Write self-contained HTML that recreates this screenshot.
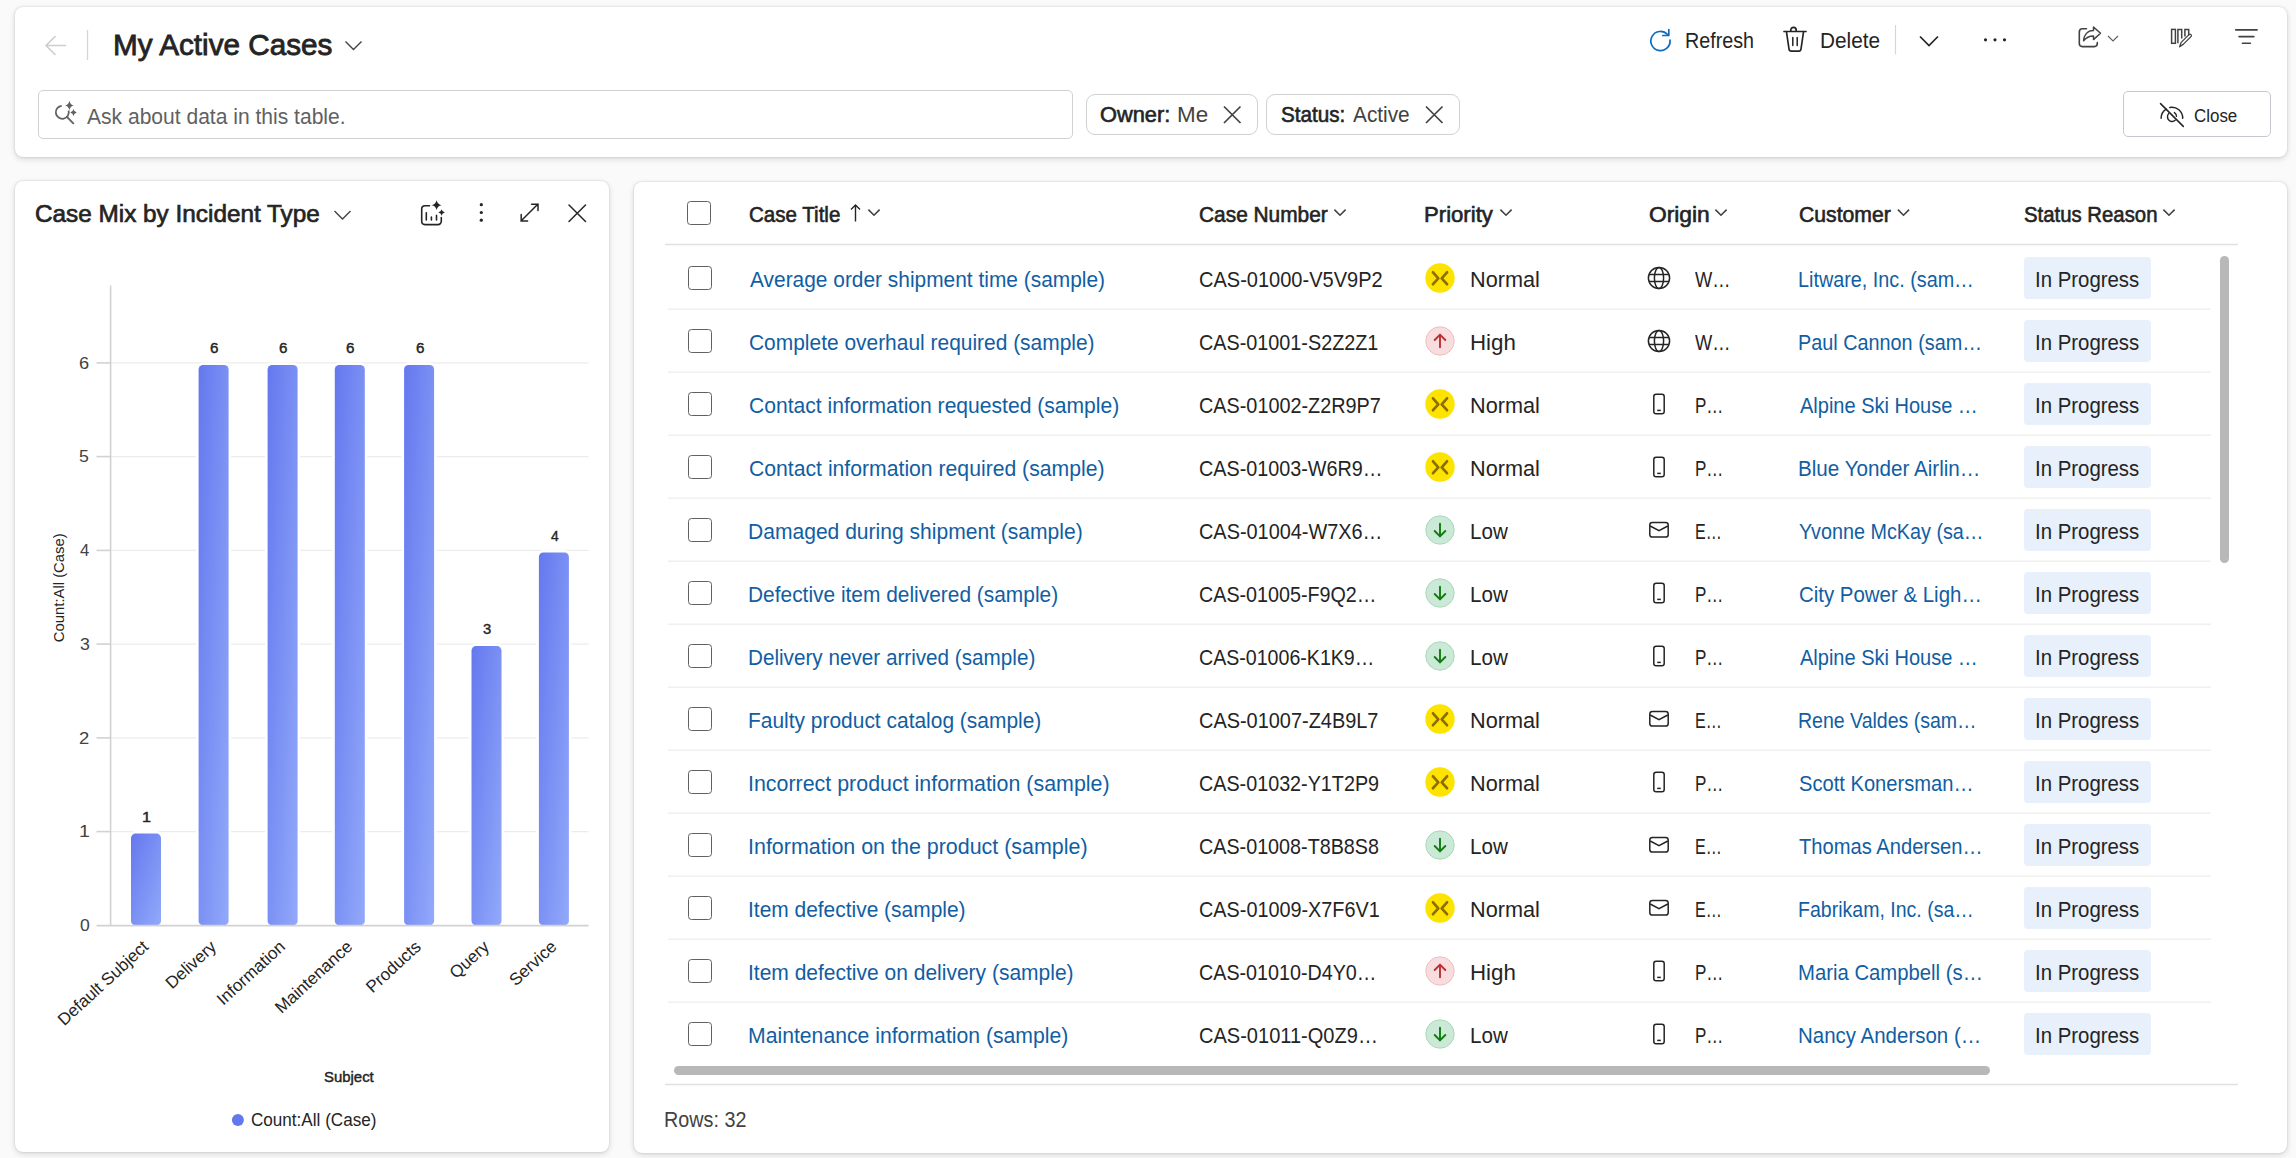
<!DOCTYPE html>
<html><head><meta charset="utf-8"><title>My Active Cases</title>
<style>
html,body{margin:0;padding:0;}
body{width:2296px;height:1158px;overflow:hidden;background:#fafafa;position:relative;font-family:"Liberation Sans",sans-serif;}
.t{position:absolute;white-space:nowrap;transform-origin:0 0;}
.card{position:absolute;background:#fff;border-radius:8px;box-shadow:0 0 2px rgba(0,0,0,0.17),0 2px 6px rgba(0,0,0,0.14);}
.abs{position:absolute;}
svg{position:absolute;overflow:visible;}
</style></head><body>

<div class="card" style="left:15px;top:7px;width:2272px;height:150px;"></div>
<svg style="left:0;top:0" width="2296" height="160"><path d="M65.5 45.5H46 M55 36.5L46 45.5L55 54.5" fill="none" stroke="#cdcdcd" stroke-width="1.6" stroke-linecap="round" stroke-linejoin="round"/><line x1="87.5" y1="30" x2="87.5" y2="60" stroke="#d6d6d6" stroke-width="1.3"/><path d="M345.5 41.5L353.5 49.5L361.5 41.5" fill="none" stroke="#424242" stroke-width="1.4"/></svg>
<div class="t" style="left:112.99px;top:29.90px;font-size:30.00px;line-height:30.00px;color:#242424;transform:scaleX(0.9893);-webkit-text-stroke:0.84px #242424;">My Active Cases</div>
<div class="abs" style="left:37.7px;top:89.6px;width:1033.5px;height:47.5px;border:1.5px solid #d1d1d1;border-radius:5px;background:#fff"></div>
<svg style="left:0;top:0" width="200" height="160"><path d="M68.6 110.6 A6.5 6.5 0 1 1 61.7 105.8" fill="none" stroke="#616161" stroke-width="1.8"/><line x1="66.9" y1="116.9" x2="73.3" y2="123.3" stroke="#616161" stroke-width="1.9" stroke-linecap="round"/><path d="M69.4 100.8 Q70.2 104.8 73.8 105.5 Q70.2 106.3 69.4 110.2 Q68.6 106.3 65 105.5 Q68.6 104.8 69.4 100.8Z" fill="#616161"/><path d="M73.5 109 Q74 112 76.8 112.5 Q74 113 73.5 116 Q73 113 70.2 112.5 Q73 112 73.5 109Z" fill="#616161"/></svg>
<div class="t" style="left:86.96px;top:106.65px;font-size:21.50px;line-height:21.50px;color:#616161;transform:scaleX(0.9789);">Ask about data in this table.</div>
<div class="abs" style="left:1085.8px;top:93.8px;width:170.5px;height:39.5px;border:1.5px solid #d1d1d1;border-radius:9px"></div>
<div class="t" style="left:1100.27px;top:105.05px;font-size:21.50px;line-height:21.50px;color:#242424;transform:scaleX(1.0148);-webkit-text-stroke:0.60px #242424;">Owner:</div>
<div class="t" style="left:1177.46px;top:105.05px;font-size:21.50px;line-height:21.50px;color:#424242;transform:scaleX(1.0424);">Me</div>
<div class="abs" style="left:1265.6px;top:93.8px;width:192px;height:39.5px;border:1.5px solid #d1d1d1;border-radius:9px"></div>
<div class="t" style="left:1280.66px;top:105.05px;font-size:21.50px;line-height:21.50px;color:#242424;transform:scaleX(0.9612);-webkit-text-stroke:0.60px #242424;">Status:</div>
<div class="t" style="left:1353.06px;top:105.05px;font-size:21.50px;line-height:21.50px;color:#424242;transform:scaleX(0.9679);">Active</div>
<svg style="left:0;top:0" width="2296" height="160"><path d="M1224 106.5L1240.5 123 M1240.5 106.5L1224 123" stroke="#424242" stroke-width="1.7" fill="none"/><path d="M1426 106.5L1442.5 123 M1442.5 106.5L1426 123" stroke="#424242" stroke-width="1.7" fill="none"/></svg>
<svg style="left:0;top:0" width="2296" height="160"><path d="M1667.5 34.5 A9.6 9.6 0 1 0 1670 40" fill="none" stroke="#0f6cbd" stroke-width="1.7" stroke-linecap="round"/><path d="M1668.8 29.5 L1668.8 35.5 L1662.8 35.5" fill="none" stroke="#0f6cbd" stroke-width="1.7" stroke-linecap="round" stroke-linejoin="round"/><path d="M1784 31.5H1806 M1790.8 31.5V30 A2.6 2.6 0 0 1 1796.2 30V31.5" fill="none" stroke="#242424" stroke-width="1.7" stroke-linecap="round"/><path d="M1786.5 32L1789 49 A2.4 2.4 0 0 0 1791.4 51.2H1798.6 A2.4 2.4 0 0 0 1801 49L1803.5 32" fill="none" stroke="#242424" stroke-width="1.7" stroke-linejoin="round"/><path d="M1792.8 37.5V45.5 M1797.2 37.5V45.5" stroke="#242424" stroke-width="1.5" stroke-linecap="round"/><line x1="1895.5" y1="25" x2="1895.5" y2="54.5" stroke="#d6d6d6" stroke-width="1.2"/><path d="M1920 36.5L1929 45.5L1938 36.5" fill="none" stroke="#242424" stroke-width="1.7"/><circle cx="1985.5" cy="39.8" r="1.6" fill="#242424"/><circle cx="1995" cy="39.8" r="1.6" fill="#242424"/><circle cx="2004.5" cy="39.8" r="1.6" fill="#242424"/><path d="M2086.5 28.7H2082.5 A3.2 3.2 0 0 0 2079.3 31.9V43.6 A3 3 0 0 0 2082.3 46.6H2094.3 A3 3 0 0 0 2097.3 43.6V42.5" fill="none" stroke="#424242" stroke-width="1.6" stroke-linecap="round"/><path d="M2093.5 27V30.6 C2087 30.6 2084 35.5 2083.6 40.8 C2086 37.5 2089 35.9 2093.5 35.9V39.6 L2100.5 33.3Z" fill="none" stroke="#424242" stroke-width="1.5" stroke-linejoin="round"/><path d="M2108 36L2113 41L2118 36" fill="none" stroke="#616161" stroke-width="1.2"/><rect x="2171.6" y="29.4" width="3.8" height="13.9" fill="none" stroke="#424242" stroke-width="1.5"/><path d="M2177.9 43.3V29.4H2181.7V38.6" fill="none" stroke="#424242" stroke-width="1.5"/><path d="M2184.9 36.4V29.4H2188.7V35.2" fill="none" stroke="#424242" stroke-width="1.5"/><path d="M2179.6 46.8L2181.2 42.4L2189 34.6 A1.4 1.4 0 0 1 2191 36.6L2183.2 44.4Z" fill="none" stroke="#424242" stroke-width="1.3" stroke-linejoin="round"/><path d="M2235.7 29.9H2257.1 M2239 36.6H2253.9 M2242.4 43.3H2250.4" stroke="#424242" stroke-width="1.6" stroke-linecap="round"/></svg>
<div class="t" style="left:1685.38px;top:31.10px;font-size:21.40px;line-height:21.40px;color:#242424;transform:scaleX(0.9223);">Refresh</div>
<div class="t" style="left:1820.10px;top:31.10px;font-size:21.40px;line-height:21.40px;color:#242424;transform:scaleX(0.9705);">Delete</div>
<div class="abs" style="left:2122.8px;top:90.6px;width:146.5px;height:44.2px;border:1.5px solid #c8c8d0;border-radius:5px"></div>
<svg style="left:0;top:0" width="2296" height="160"><path d="M2161.1 118.3 A10.8 10.8 0 0 1 2166.3 109.2 M2169.8 107.4 A10.8 10.8 0 0 1 2182.7 118.3" fill="none" stroke="#242424" stroke-width="1.5" stroke-linecap="round"/><path d="M2174.4 112.6 A4.6 4.6 0 0 1 2176.5 116.2 M2175.2 120.3 A4.6 4.6 0 0 1 2167.5 116.8 A4.6 4.6 0 0 1 2168.6 113.6" fill="none" stroke="#242424" stroke-width="1.4" stroke-linecap="round"/><line x1="2160.5" y1="103.6" x2="2183.3" y2="126.4" stroke="#242424" stroke-width="1.5" stroke-linecap="round"/></svg>
<div class="t" style="left:2194.14px;top:106.75px;font-size:18.30px;line-height:18.30px;color:#242424;transform:scaleX(0.9258);">Close</div>
<div class="card" style="left:15px;top:181px;width:594px;height:971px;border-radius:8px"></div>
<div class="t" style="left:35.11px;top:201.90px;font-size:24.40px;line-height:24.40px;color:#242424;transform:scaleX(0.9970);-webkit-text-stroke:0.68px #242424;">Case Mix by Incident Type</div>
<svg style="left:0;top:0" width="620" height="260"><path d="M334.5 211L342.5 219L350.5 211" fill="none" stroke="#424242" stroke-width="1.4"/><path d="M429.5 205.7H425 A3.3 3.3 0 0 0 421.7 209V221.3 A3.3 3.3 0 0 0 425 224.6H438 A3.3 3.3 0 0 0 441.3 221.3V217.5" fill="none" stroke="#242424" stroke-width="1.6" stroke-linecap="round"/><path d="M426.3 212.8V220 M431.4 217V220 M436.5 215.4V220" stroke="#242424" stroke-width="1.6" stroke-linecap="round"/><path d="M436.6 200.3 Q437.4 204.4 441.5 205.2 Q437.4 206 436.6 210 Q435.8 206 431.7 205.2 Q435.8 204.4 436.6 200.3Z" fill="#242424"/><path d="M441.6 209.2 Q442.1 212 444.9 212.5 Q442.1 213 441.6 215.8 Q441.1 213 438.3 212.5 Q441.1 212 441.6 209.2Z" fill="#242424"/><circle cx="481.3" cy="204.7" r="1.6" fill="#242424"/><circle cx="481.3" cy="212.5" r="1.6" fill="#242424"/><circle cx="481.3" cy="220.2" r="1.6" fill="#242424"/><path d="M521 221L538 204 M531.6 204.2H538 V210.6 M521.2 214.6V221H527.6" fill="none" stroke="#242424" stroke-width="1.5" stroke-linecap="round"/><path d="M569 205L585.5 221.5 M585.5 205L569 221.5" fill="none" stroke="#242424" stroke-width="1.5" stroke-linecap="round"/></svg>
<svg style="left:0;top:0" width="620" height="1158"><defs><linearGradient id="bg" x1="0" y1="0" x2="1" y2="1"><stop offset="0" stop-color="#6478ee"/><stop offset="1" stop-color="#92a9fa"/></linearGradient></defs><line x1="110" y1="831.6" x2="588.5" y2="831.6" stroke="#ececec" stroke-width="1.3"/><line x1="96.5" y1="831.6" x2="110" y2="831.6" stroke="#d2d2d2" stroke-width="1.6"/><line x1="110" y1="737.9" x2="588.5" y2="737.9" stroke="#ececec" stroke-width="1.3"/><line x1="96.5" y1="737.9" x2="110" y2="737.9" stroke="#d2d2d2" stroke-width="1.6"/><line x1="110" y1="644.1" x2="588.5" y2="644.1" stroke="#ececec" stroke-width="1.3"/><line x1="96.5" y1="644.1" x2="110" y2="644.1" stroke="#d2d2d2" stroke-width="1.6"/><line x1="110" y1="550.4" x2="588.5" y2="550.4" stroke="#ececec" stroke-width="1.3"/><line x1="96.5" y1="550.4" x2="110" y2="550.4" stroke="#d2d2d2" stroke-width="1.6"/><line x1="110" y1="456.6" x2="588.5" y2="456.6" stroke="#ececec" stroke-width="1.3"/><line x1="96.5" y1="456.6" x2="110" y2="456.6" stroke="#d2d2d2" stroke-width="1.6"/><line x1="110" y1="362.9" x2="588.5" y2="362.9" stroke="#ececec" stroke-width="1.3"/><line x1="96.5" y1="362.9" x2="110" y2="362.9" stroke="#d2d2d2" stroke-width="1.6"/><rect x="131.0" y="833.6" width="30.0" height="91.8" rx="4.5" fill="url(#bg)" stroke="#fff" stroke-width="5" paint-order="stroke"/><rect x="198.6" y="364.9" width="30.0" height="560.5" rx="4.5" fill="url(#bg)" stroke="#fff" stroke-width="5" paint-order="stroke"/><rect x="267.6" y="364.9" width="30.0" height="560.5" rx="4.5" fill="url(#bg)" stroke="#fff" stroke-width="5" paint-order="stroke"/><rect x="334.8" y="364.9" width="30.0" height="560.5" rx="4.5" fill="url(#bg)" stroke="#fff" stroke-width="5" paint-order="stroke"/><rect x="404.1" y="364.9" width="30.0" height="560.5" rx="4.5" fill="url(#bg)" stroke="#fff" stroke-width="5" paint-order="stroke"/><rect x="471.5" y="646.1" width="30.0" height="279.2" rx="4.5" fill="url(#bg)" stroke="#fff" stroke-width="5" paint-order="stroke"/><rect x="538.9" y="552.4" width="30.0" height="373.0" rx="4.5" fill="url(#bg)" stroke="#fff" stroke-width="5" paint-order="stroke"/><line x1="110.6" y1="285.5" x2="110.6" y2="926" stroke="#d2d2d2" stroke-width="1.6"/><line x1="96.5" y1="925.6" x2="588.6" y2="925.6" stroke="#d2d2d2" stroke-width="1.6"/></svg>
<div class="t" style="left:79.51px;top:917.00px;font-size:17.00px;line-height:17.00px;color:#424242;transform:scaleX(1.0336);">0</div>
<div class="t" style="left:78.72px;top:823.25px;font-size:17.00px;line-height:17.00px;color:#424242;transform:scaleX(1.1460);">1</div>
<div class="t" style="left:79.27px;top:729.50px;font-size:17.00px;line-height:17.00px;color:#424242;transform:scaleX(1.0846);">2</div>
<div class="t" style="left:79.53px;top:635.75px;font-size:17.00px;line-height:17.00px;color:#424242;transform:scaleX(1.0421);">3</div>
<div class="t" style="left:79.82px;top:542.00px;font-size:17.00px;line-height:17.00px;color:#424242;transform:scaleX(0.9805);">4</div>
<div class="t" style="left:79.49px;top:448.25px;font-size:17.00px;line-height:17.00px;color:#424242;transform:scaleX(1.0421);">5</div>
<div class="t" style="left:79.28px;top:354.50px;font-size:17.00px;line-height:17.00px;color:#424242;transform:scaleX(1.0708);">6</div>
<div class="t" style="left:142.06px;top:809.85px;font-size:14.00px;line-height:14.00px;color:#242424;transform:scaleX(1.1608);-webkit-text-stroke:0.39px #242424;">1</div>
<div class="t" style="left:210.12px;top:341.10px;font-size:14.00px;line-height:14.00px;color:#242424;transform:scaleX(1.0847);-webkit-text-stroke:0.39px #242424;">6</div>
<div class="t" style="left:279.12px;top:341.10px;font-size:14.00px;line-height:14.00px;color:#242424;transform:scaleX(1.0847);-webkit-text-stroke:0.39px #242424;">6</div>
<div class="t" style="left:346.32px;top:341.10px;font-size:14.00px;line-height:14.00px;color:#242424;transform:scaleX(1.0847);-webkit-text-stroke:0.39px #242424;">6</div>
<div class="t" style="left:415.62px;top:341.10px;font-size:14.00px;line-height:14.00px;color:#242424;transform:scaleX(1.0847);-webkit-text-stroke:0.39px #242424;">6</div>
<div class="t" style="left:483.23px;top:622.35px;font-size:14.00px;line-height:14.00px;color:#242424;transform:scaleX(1.0556);-webkit-text-stroke:0.39px #242424;">3</div>
<div class="t" style="left:550.88px;top:528.60px;font-size:14.00px;line-height:14.00px;color:#242424;transform:scaleX(0.9932);-webkit-text-stroke:0.39px #242424;">4</div>
<div class="t" style="left:33.74px;top:934.02px;font-size:17.10px;line-height:17.10px;color:#242424;transform-origin:100% 84.67%;transform:rotate(-42.5deg);width:115.96px;text-align:right">Default Subject</div>
<div class="t" style="left:155.54px;top:934.02px;font-size:17.10px;line-height:17.10px;color:#242424;transform-origin:100% 84.67%;transform:rotate(-42.5deg);width:61.76px;text-align:right">Delivery</div>
<div class="t" style="left:200.76px;top:934.02px;font-size:17.10px;line-height:17.10px;color:#242424;transform-origin:100% 84.67%;transform:rotate(-42.5deg);width:85.54px;text-align:right">Information</div>
<div class="t" style="left:255.59px;top:934.02px;font-size:17.10px;line-height:17.10px;color:#242424;transform-origin:100% 84.67%;transform:rotate(-42.5deg);width:97.91px;text-align:right">Maintenance</div>
<div class="t" style="left:355.32px;top:934.02px;font-size:17.10px;line-height:17.10px;color:#242424;transform-origin:100% 84.67%;transform:rotate(-42.5deg);width:67.48px;text-align:right">Products</div>
<div class="t" style="left:443.64px;top:934.02px;font-size:17.10px;line-height:17.10px;color:#242424;transform-origin:100% 84.67%;transform:rotate(-42.5deg);width:46.56px;text-align:right">Query</div>
<div class="t" style="left:500.58px;top:934.02px;font-size:17.10px;line-height:17.10px;color:#242424;transform-origin:100% 84.67%;transform:rotate(-42.5deg);width:57.02px;text-align:right">Service</div>
<div class="t" style="left:2.14px;top:580.25px;font-size:15.50px;line-height:15.50px;color:#242424;transform-origin:50% 50%;transform:rotate(-90deg) scaleX(0.9568);width:113.71px;text-align:center">Count:All (Case)</div>
<div class="t" style="left:324.13px;top:1068.70px;font-size:15.00px;line-height:15.00px;color:#242424;transform:scaleX(0.9947);-webkit-text-stroke:0.42px #242424;">Subject</div>
<svg style="left:0;top:0" width="620" height="1158"><circle cx="237.9" cy="1120" r="6" fill="#6478ee"/></svg>
<div class="t" style="left:251.23px;top:1111.85px;font-size:17.50px;line-height:17.50px;color:#242424;transform:scaleX(0.9770);">Count:All (Case)</div>
<div class="card" style="left:634px;top:181.5px;width:1653px;height:971.5px;border-radius:8px"></div>
<div class="abs" style="left:686.8px;top:200.6px;width:22px;height:22px;border:1.5px solid #616161;border-radius:3.5px"></div>
<div class="t" style="left:749.26px;top:205.35px;font-size:21.50px;line-height:21.50px;color:#242424;transform:scaleX(0.9556);-webkit-text-stroke:0.60px #242424;">Case Title</div>
<div class="t" style="left:1198.84px;top:205.35px;font-size:21.50px;line-height:21.50px;color:#242424;transform:scaleX(0.9711);-webkit-text-stroke:0.60px #242424;">Case Number</div>
<div class="t" style="left:1424.49px;top:205.35px;font-size:21.50px;line-height:21.50px;color:#242424;transform:scaleX(1.0293);-webkit-text-stroke:0.60px #242424;">Priority</div>
<div class="t" style="left:1648.82px;top:205.35px;font-size:21.50px;line-height:21.50px;color:#242424;transform:scaleX(1.0594);-webkit-text-stroke:0.60px #242424;">Origin</div>
<div class="t" style="left:1798.93px;top:205.35px;font-size:21.50px;line-height:21.50px;color:#242424;transform:scaleX(0.9853);-webkit-text-stroke:0.60px #242424;">Customer</div>
<div class="t" style="left:2024.38px;top:205.35px;font-size:21.50px;line-height:21.50px;color:#242424;transform:scaleX(0.9462);-webkit-text-stroke:0.60px #242424;">Status Reason</div>
<svg style="left:0;top:0" width="2296" height="1158"><path d="M855.5 205V221.5 M851 209.5L855.5 205L860 209.5" fill="none" stroke="#242424" stroke-width="1.4"/><path d="M868.4 209.6L874.0 215.2L879.6 209.6" fill="none" stroke="#424242" stroke-width="1.6"/><path d="M1334.4 209.6L1340.0 215.2L1345.6 209.6" fill="none" stroke="#424242" stroke-width="1.6"/><path d="M1500.4 209.6L1506.0 215.2L1511.6 209.6" fill="none" stroke="#424242" stroke-width="1.6"/><path d="M1715.4 209.6L1721.0 215.2L1726.6 209.6" fill="none" stroke="#424242" stroke-width="1.6"/><path d="M1897.9 209.6L1903.5 215.2L1909.1 209.6" fill="none" stroke="#424242" stroke-width="1.6"/><path d="M2163.4 209.6L2169.0 215.2L2174.6 209.6" fill="none" stroke="#424242" stroke-width="1.6"/><line x1="665" y1="244.5" x2="2238" y2="244.5" stroke="#e0e0e0" stroke-width="1.6"/><line x1="668" y1="309.3" x2="2211" y2="309.3" stroke="#f0f0f0" stroke-width="1.4"/><line x1="668" y1="372.3" x2="2211" y2="372.3" stroke="#f0f0f0" stroke-width="1.4"/><line x1="668" y1="435.3" x2="2211" y2="435.3" stroke="#f0f0f0" stroke-width="1.4"/><line x1="668" y1="498.3" x2="2211" y2="498.3" stroke="#f0f0f0" stroke-width="1.4"/><line x1="668" y1="561.3" x2="2211" y2="561.3" stroke="#f0f0f0" stroke-width="1.4"/><line x1="668" y1="624.3" x2="2211" y2="624.3" stroke="#f0f0f0" stroke-width="1.4"/><line x1="668" y1="687.3" x2="2211" y2="687.3" stroke="#f0f0f0" stroke-width="1.4"/><line x1="668" y1="750.3" x2="2211" y2="750.3" stroke="#f0f0f0" stroke-width="1.4"/><line x1="668" y1="813.3" x2="2211" y2="813.3" stroke="#f0f0f0" stroke-width="1.4"/><line x1="668" y1="876.3" x2="2211" y2="876.3" stroke="#f0f0f0" stroke-width="1.4"/><line x1="668" y1="939.3" x2="2211" y2="939.3" stroke="#f0f0f0" stroke-width="1.4"/><line x1="668" y1="1002.3" x2="2211" y2="1002.3" stroke="#f0f0f0" stroke-width="1.4"/><line x1="665" y1="1084.5" x2="2238" y2="1084.5" stroke="#e0e0e0" stroke-width="1.4"/><rect x="2220" y="256" width="9" height="307" rx="4.5" fill="#b8b8b8"/><rect x="674" y="1066" width="1316" height="9" rx="4.5" fill="#b8b8b8"/></svg>
<div class="abs" style="left:687.6px;top:265.6px;width:22px;height:22px;border:1.5px solid #616161;border-radius:3.5px"></div>
<div class="t" style="left:749.66px;top:270.05px;font-size:21.50px;line-height:21.50px;color:#115ea3;transform:scaleX(0.9720);">Average order shipment time (sample)</div>
<div class="t" style="left:1198.58px;top:270.05px;font-size:21.50px;line-height:21.50px;color:#242424;transform:scaleX(0.9311);">CAS-01000-V5V9P2</div>
<div class="t" style="left:1469.62px;top:270.05px;font-size:21.50px;line-height:21.50px;color:#242424;transform:scaleX(1.0078);">Normal</div>
<div class="t" style="left:1695.22px;top:270.05px;font-size:21.50px;line-height:21.50px;color:#242424;transform:scaleX(0.8484);">W…</div>
<div class="t" style="left:1798.08px;top:270.05px;font-size:21.50px;line-height:21.50px;color:#115ea3;transform:scaleX(0.9202);">Litware, Inc. (sam…</div>
<div class="abs" style="left:2024.2px;top:257.0px;width:126.8px;height:42px;background:#e8f0fc;border-radius:4px"></div>
<div class="t" style="left:2034.72px;top:270.05px;font-size:21.50px;line-height:21.50px;color:#242424;transform:scaleX(0.9480);">In Progress</div>
<div class="abs" style="left:687.6px;top:328.6px;width:22px;height:22px;border:1.5px solid #616161;border-radius:3.5px"></div>
<div class="t" style="left:748.64px;top:333.05px;font-size:21.50px;line-height:21.50px;color:#115ea3;transform:scaleX(0.9736);">Complete overhaul required (sample)</div>
<div class="t" style="left:1198.59px;top:333.05px;font-size:21.50px;line-height:21.50px;color:#242424;transform:scaleX(0.9209);">CAS-01001-S2Z2Z1</div>
<div class="t" style="left:1469.57px;top:333.05px;font-size:21.50px;line-height:21.50px;color:#242424;transform:scaleX(1.0375);">High</div>
<div class="t" style="left:1695.22px;top:333.05px;font-size:21.50px;line-height:21.50px;color:#242424;transform:scaleX(0.8484);">W…</div>
<div class="t" style="left:1798.07px;top:333.05px;font-size:21.50px;line-height:21.50px;color:#115ea3;transform:scaleX(0.9221);">Paul Cannon (sam…</div>
<div class="abs" style="left:2024.2px;top:320.0px;width:126.8px;height:42px;background:#e8f0fc;border-radius:4px"></div>
<div class="t" style="left:2034.72px;top:333.05px;font-size:21.50px;line-height:21.50px;color:#242424;transform:scaleX(0.9480);">In Progress</div>
<div class="abs" style="left:687.6px;top:391.6px;width:22px;height:22px;border:1.5px solid #616161;border-radius:3.5px"></div>
<div class="t" style="left:748.63px;top:396.05px;font-size:21.50px;line-height:21.50px;color:#115ea3;transform:scaleX(0.9803);">Contact information requested (sample)</div>
<div class="t" style="left:1198.59px;top:396.05px;font-size:21.50px;line-height:21.50px;color:#242424;transform:scaleX(0.9220);">CAS-01002-Z2R9P7</div>
<div class="t" style="left:1469.62px;top:396.05px;font-size:21.50px;line-height:21.50px;color:#242424;transform:scaleX(1.0078);">Normal</div>
<div class="t" style="left:1695.10px;top:396.05px;font-size:21.50px;line-height:21.50px;color:#242424;transform:scaleX(0.7927);">P…</div>
<div class="t" style="left:1799.66px;top:396.05px;font-size:21.50px;line-height:21.50px;color:#115ea3;transform:scaleX(0.9302);">Alpine Ski House …</div>
<div class="abs" style="left:2024.2px;top:383.0px;width:126.8px;height:42px;background:#e8f0fc;border-radius:4px"></div>
<div class="t" style="left:2034.72px;top:396.05px;font-size:21.50px;line-height:21.50px;color:#242424;transform:scaleX(0.9480);">In Progress</div>
<div class="abs" style="left:687.6px;top:454.6px;width:22px;height:22px;border:1.5px solid #616161;border-radius:3.5px"></div>
<div class="t" style="left:748.62px;top:459.05px;font-size:21.50px;line-height:21.50px;color:#115ea3;transform:scaleX(0.9851);">Contact information required (sample)</div>
<div class="t" style="left:1198.60px;top:459.05px;font-size:21.50px;line-height:21.50px;color:#242424;transform:scaleX(0.9195);">CAS-01003-W6R9…</div>
<div class="t" style="left:1469.62px;top:459.05px;font-size:21.50px;line-height:21.50px;color:#242424;transform:scaleX(1.0078);">Normal</div>
<div class="t" style="left:1695.10px;top:459.05px;font-size:21.50px;line-height:21.50px;color:#242424;transform:scaleX(0.7927);">P…</div>
<div class="t" style="left:1798.01px;top:459.05px;font-size:21.50px;line-height:21.50px;color:#115ea3;transform:scaleX(0.9603);">Blue Yonder Airlin…</div>
<div class="abs" style="left:2024.2px;top:446.0px;width:126.8px;height:42px;background:#e8f0fc;border-radius:4px"></div>
<div class="t" style="left:2034.72px;top:459.05px;font-size:21.50px;line-height:21.50px;color:#242424;transform:scaleX(0.9480);">In Progress</div>
<div class="abs" style="left:687.6px;top:517.6px;width:22px;height:22px;border:1.5px solid #616161;border-radius:3.5px"></div>
<div class="t" style="left:747.97px;top:522.05px;font-size:21.50px;line-height:21.50px;color:#115ea3;transform:scaleX(0.9794);">Damaged during shipment (sample)</div>
<div class="t" style="left:1198.59px;top:522.05px;font-size:21.50px;line-height:21.50px;color:#242424;transform:scaleX(0.9251);">CAS-01004-W7X6…</div>
<div class="t" style="left:1469.71px;top:522.05px;font-size:21.50px;line-height:21.50px;color:#242424;transform:scaleX(0.9568);">Low</div>
<div class="t" style="left:1695.18px;top:522.05px;font-size:21.50px;line-height:21.50px;color:#242424;transform:scaleX(0.7478);">E…</div>
<div class="t" style="left:1799.27px;top:522.05px;font-size:21.50px;line-height:21.50px;color:#115ea3;transform:scaleX(0.9196);">Yvonne McKay (sa…</div>
<div class="abs" style="left:2024.2px;top:509.0px;width:126.8px;height:42px;background:#e8f0fc;border-radius:4px"></div>
<div class="t" style="left:2034.72px;top:522.05px;font-size:21.50px;line-height:21.50px;color:#242424;transform:scaleX(0.9480);">In Progress</div>
<div class="abs" style="left:687.6px;top:580.6px;width:22px;height:22px;border:1.5px solid #616161;border-radius:3.5px"></div>
<div class="t" style="left:747.99px;top:585.05px;font-size:21.50px;line-height:21.50px;color:#115ea3;transform:scaleX(0.9720);">Defective item delivered (sample)</div>
<div class="t" style="left:1198.60px;top:585.05px;font-size:21.50px;line-height:21.50px;color:#242424;transform:scaleX(0.9168);">CAS-01005-F9Q2…</div>
<div class="t" style="left:1469.71px;top:585.05px;font-size:21.50px;line-height:21.50px;color:#242424;transform:scaleX(0.9568);">Low</div>
<div class="t" style="left:1695.10px;top:585.05px;font-size:21.50px;line-height:21.50px;color:#242424;transform:scaleX(0.7927);">P…</div>
<div class="t" style="left:1798.66px;top:585.05px;font-size:21.50px;line-height:21.50px;color:#115ea3;transform:scaleX(0.9503);">City Power &amp; Ligh…</div>
<div class="abs" style="left:2024.2px;top:572.0px;width:126.8px;height:42px;background:#e8f0fc;border-radius:4px"></div>
<div class="t" style="left:2034.72px;top:585.05px;font-size:21.50px;line-height:21.50px;color:#242424;transform:scaleX(0.9480);">In Progress</div>
<div class="abs" style="left:687.6px;top:643.6px;width:22px;height:22px;border:1.5px solid #616161;border-radius:3.5px"></div>
<div class="t" style="left:748.00px;top:648.05px;font-size:21.50px;line-height:21.50px;color:#115ea3;transform:scaleX(0.9618);">Delivery never arrived (sample)</div>
<div class="t" style="left:1198.60px;top:648.05px;font-size:21.50px;line-height:21.50px;color:#242424;transform:scaleX(0.9114);">CAS-01006-K1K9…</div>
<div class="t" style="left:1469.71px;top:648.05px;font-size:21.50px;line-height:21.50px;color:#242424;transform:scaleX(0.9568);">Low</div>
<div class="t" style="left:1695.10px;top:648.05px;font-size:21.50px;line-height:21.50px;color:#242424;transform:scaleX(0.7927);">P…</div>
<div class="t" style="left:1799.66px;top:648.05px;font-size:21.50px;line-height:21.50px;color:#115ea3;transform:scaleX(0.9302);">Alpine Ski House …</div>
<div class="abs" style="left:2024.2px;top:635.0px;width:126.8px;height:42px;background:#e8f0fc;border-radius:4px"></div>
<div class="t" style="left:2034.72px;top:648.05px;font-size:21.50px;line-height:21.50px;color:#242424;transform:scaleX(0.9480);">In Progress</div>
<div class="abs" style="left:687.6px;top:706.6px;width:22px;height:22px;border:1.5px solid #616161;border-radius:3.5px"></div>
<div class="t" style="left:747.98px;top:711.05px;font-size:21.50px;line-height:21.50px;color:#115ea3;transform:scaleX(0.9740);">Faulty product catalog (sample)</div>
<div class="t" style="left:1198.59px;top:711.05px;font-size:21.50px;line-height:21.50px;color:#242424;transform:scaleX(0.9267);">CAS-01007-Z4B9L7</div>
<div class="t" style="left:1469.62px;top:711.05px;font-size:21.50px;line-height:21.50px;color:#242424;transform:scaleX(1.0078);">Normal</div>
<div class="t" style="left:1695.18px;top:711.05px;font-size:21.50px;line-height:21.50px;color:#242424;transform:scaleX(0.7478);">E…</div>
<div class="t" style="left:1798.10px;top:711.05px;font-size:21.50px;line-height:21.50px;color:#115ea3;transform:scaleX(0.9079);">Rene Valdes (sam…</div>
<div class="abs" style="left:2024.2px;top:698.0px;width:126.8px;height:42px;background:#e8f0fc;border-radius:4px"></div>
<div class="t" style="left:2034.72px;top:711.05px;font-size:21.50px;line-height:21.50px;color:#242424;transform:scaleX(0.9480);">In Progress</div>
<div class="abs" style="left:687.6px;top:769.6px;width:22px;height:22px;border:1.5px solid #616161;border-radius:3.5px"></div>
<div class="t" style="left:747.72px;top:774.05px;font-size:21.50px;line-height:21.50px;color:#115ea3;transform:scaleX(0.9955);">Incorrect product information (sample)</div>
<div class="t" style="left:1198.60px;top:774.05px;font-size:21.50px;line-height:21.50px;color:#242424;transform:scaleX(0.9186);">CAS-01032-Y1T2P9</div>
<div class="t" style="left:1469.62px;top:774.05px;font-size:21.50px;line-height:21.50px;color:#242424;transform:scaleX(1.0078);">Normal</div>
<div class="t" style="left:1695.10px;top:774.05px;font-size:21.50px;line-height:21.50px;color:#242424;transform:scaleX(0.7927);">P…</div>
<div class="t" style="left:1798.79px;top:774.05px;font-size:21.50px;line-height:21.50px;color:#115ea3;transform:scaleX(0.9364);">Scott Konersman…</div>
<div class="abs" style="left:2024.2px;top:761.0px;width:126.8px;height:42px;background:#e8f0fc;border-radius:4px"></div>
<div class="t" style="left:2034.72px;top:774.05px;font-size:21.50px;line-height:21.50px;color:#242424;transform:scaleX(0.9480);">In Progress</div>
<div class="abs" style="left:687.6px;top:832.6px;width:22px;height:22px;border:1.5px solid #616161;border-radius:3.5px"></div>
<div class="t" style="left:747.72px;top:837.05px;font-size:21.50px;line-height:21.50px;color:#115ea3;transform:scaleX(0.9971);">Information on the product (sample)</div>
<div class="t" style="left:1198.60px;top:837.05px;font-size:21.50px;line-height:21.50px;color:#242424;transform:scaleX(0.9182);">CAS-01008-T8B8S8</div>
<div class="t" style="left:1469.71px;top:837.05px;font-size:21.50px;line-height:21.50px;color:#242424;transform:scaleX(0.9568);">Low</div>
<div class="t" style="left:1695.18px;top:837.05px;font-size:21.50px;line-height:21.50px;color:#242424;transform:scaleX(0.7478);">E…</div>
<div class="t" style="left:1799.25px;top:837.05px;font-size:21.50px;line-height:21.50px;color:#115ea3;transform:scaleX(0.9372);">Thomas Andersen…</div>
<div class="abs" style="left:2024.2px;top:824.0px;width:126.8px;height:42px;background:#e8f0fc;border-radius:4px"></div>
<div class="t" style="left:2034.72px;top:837.05px;font-size:21.50px;line-height:21.50px;color:#242424;transform:scaleX(0.9480);">In Progress</div>
<div class="abs" style="left:687.6px;top:895.6px;width:22px;height:22px;border:1.5px solid #616161;border-radius:3.5px"></div>
<div class="t" style="left:747.77px;top:900.05px;font-size:21.50px;line-height:21.50px;color:#115ea3;transform:scaleX(0.9736);">Item defective (sample)</div>
<div class="t" style="left:1198.59px;top:900.05px;font-size:21.50px;line-height:21.50px;color:#242424;transform:scaleX(0.9223);">CAS-01009-X7F6V1</div>
<div class="t" style="left:1469.62px;top:900.05px;font-size:21.50px;line-height:21.50px;color:#242424;transform:scaleX(1.0078);">Normal</div>
<div class="t" style="left:1695.18px;top:900.05px;font-size:21.50px;line-height:21.50px;color:#242424;transform:scaleX(0.7478);">E…</div>
<div class="t" style="left:1798.10px;top:900.05px;font-size:21.50px;line-height:21.50px;color:#115ea3;transform:scaleX(0.9086);">Fabrikam, Inc. (sa…</div>
<div class="abs" style="left:2024.2px;top:887.0px;width:126.8px;height:42px;background:#e8f0fc;border-radius:4px"></div>
<div class="t" style="left:2034.72px;top:900.05px;font-size:21.50px;line-height:21.50px;color:#242424;transform:scaleX(0.9480);">In Progress</div>
<div class="abs" style="left:687.6px;top:958.6px;width:22px;height:22px;border:1.5px solid #616161;border-radius:3.5px"></div>
<div class="t" style="left:747.76px;top:963.05px;font-size:21.50px;line-height:21.50px;color:#115ea3;transform:scaleX(0.9765);">Item defective on delivery (sample)</div>
<div class="t" style="left:1198.60px;top:963.05px;font-size:21.50px;line-height:21.50px;color:#242424;transform:scaleX(0.9167);">CAS-01010-D4Y0…</div>
<div class="t" style="left:1469.57px;top:963.05px;font-size:21.50px;line-height:21.50px;color:#242424;transform:scaleX(1.0375);">High</div>
<div class="t" style="left:1695.10px;top:963.05px;font-size:21.50px;line-height:21.50px;color:#242424;transform:scaleX(0.7927);">P…</div>
<div class="t" style="left:1798.04px;top:963.05px;font-size:21.50px;line-height:21.50px;color:#115ea3;transform:scaleX(0.9438);">Maria Campbell (s…</div>
<div class="abs" style="left:2024.2px;top:950.0px;width:126.8px;height:42px;background:#e8f0fc;border-radius:4px"></div>
<div class="t" style="left:2034.72px;top:963.05px;font-size:21.50px;line-height:21.50px;color:#242424;transform:scaleX(0.9480);">In Progress</div>
<div class="abs" style="left:687.6px;top:1021.6px;width:22px;height:22px;border:1.5px solid #616161;border-radius:3.5px"></div>
<div class="t" style="left:747.96px;top:1026.05px;font-size:21.50px;line-height:21.50px;color:#115ea3;transform:scaleX(0.9856);">Maintenance information (sample)</div>
<div class="t" style="left:1198.58px;top:1026.05px;font-size:21.50px;line-height:21.50px;color:#242424;transform:scaleX(0.9320);">CAS-01011-Q0Z9…</div>
<div class="t" style="left:1469.71px;top:1026.05px;font-size:21.50px;line-height:21.50px;color:#242424;transform:scaleX(0.9568);">Low</div>
<div class="t" style="left:1695.10px;top:1026.05px;font-size:21.50px;line-height:21.50px;color:#242424;transform:scaleX(0.7927);">P…</div>
<div class="t" style="left:1798.02px;top:1026.05px;font-size:21.50px;line-height:21.50px;color:#115ea3;transform:scaleX(0.9520);">Nancy Anderson (…</div>
<div class="abs" style="left:2024.2px;top:1013.0px;width:126.8px;height:42px;background:#e8f0fc;border-radius:4px"></div>
<div class="t" style="left:2034.72px;top:1026.05px;font-size:21.50px;line-height:21.50px;color:#242424;transform:scaleX(0.9480);">In Progress</div>
<svg style="left:0;top:0" width="2296" height="1158"><circle cx="1440.0" cy="278.0" r="14.7" fill="#fde300"/><path d="M1433.0 272.3L1438.3 278.3L1433.0 284.2 M1447.0 272.3L1441.7 278.3L1447.0 284.2" fill="none" stroke="#8e6c00" stroke-width="2.7" stroke-linecap="round" stroke-linejoin="round"/><g fill="none" stroke="#242424" stroke-width="1.5"><circle cx="1659.0" cy="278.0" r="10.6"/><ellipse cx="1659.0" cy="278.0" rx="4.6" ry="10.6"/><path d="M1649.0 274.4H1669.0 M1649.0 281.6H1669.0"/></g><circle cx="1440.0" cy="341.0" r="14.2" fill="#f9dcdd" stroke="#eebfc2" stroke-width="1"/><path d="M1440.0 347.3V334.6 M1434.7 340.0L1440.0 334.6L1445.3 340.0" fill="none" stroke="#bc2f32" stroke-width="1.9" stroke-linecap="round" stroke-linejoin="round"/><g fill="none" stroke="#242424" stroke-width="1.5"><circle cx="1659.0" cy="341.0" r="10.6"/><ellipse cx="1659.0" cy="341.0" rx="4.6" ry="10.6"/><path d="M1649.0 337.4H1669.0 M1649.0 344.6H1669.0"/></g><circle cx="1440.0" cy="404.0" r="14.7" fill="#fde300"/><path d="M1433.0 398.3L1438.3 404.3L1433.0 410.2 M1447.0 398.3L1441.7 404.3L1447.0 410.2" fill="none" stroke="#8e6c00" stroke-width="2.7" stroke-linecap="round" stroke-linejoin="round"/><rect x="1653.8" y="394.2" width="10.4" height="19.6" rx="2.3" fill="none" stroke="#242424" stroke-width="1.5"/><line x1="1657.2" y1="410.4" x2="1660.8" y2="410.4" stroke="#242424" stroke-width="1.5"/><circle cx="1440.0" cy="467.0" r="14.7" fill="#fde300"/><path d="M1433.0 461.3L1438.3 467.3L1433.0 473.2 M1447.0 461.3L1441.7 467.3L1447.0 473.2" fill="none" stroke="#8e6c00" stroke-width="2.7" stroke-linecap="round" stroke-linejoin="round"/><rect x="1653.8" y="457.2" width="10.4" height="19.6" rx="2.3" fill="none" stroke="#242424" stroke-width="1.5"/><line x1="1657.2" y1="473.4" x2="1660.8" y2="473.4" stroke="#242424" stroke-width="1.5"/><circle cx="1440.0" cy="530.0" r="14.2" fill="#cae9d6" stroke="#acd8ba" stroke-width="1"/><path d="M1440.0 523.7V536.4 M1434.7 531.0L1440.0 536.4L1445.3 531.0" fill="none" stroke="#107c10" stroke-width="1.9" stroke-linecap="round" stroke-linejoin="round"/><rect x="1649.8" y="522.5" width="18.4" height="14.6" rx="2.6" fill="none" stroke="#242424" stroke-width="1.5"/><path d="M1650.2 526.0L1659.0 530.6L1667.8 526.0" fill="none" stroke="#242424" stroke-width="1.5"/><circle cx="1440.0" cy="593.0" r="14.2" fill="#cae9d6" stroke="#acd8ba" stroke-width="1"/><path d="M1440.0 586.7V599.4 M1434.7 594.0L1440.0 599.4L1445.3 594.0" fill="none" stroke="#107c10" stroke-width="1.9" stroke-linecap="round" stroke-linejoin="round"/><rect x="1653.8" y="583.2" width="10.4" height="19.6" rx="2.3" fill="none" stroke="#242424" stroke-width="1.5"/><line x1="1657.2" y1="599.4" x2="1660.8" y2="599.4" stroke="#242424" stroke-width="1.5"/><circle cx="1440.0" cy="656.0" r="14.2" fill="#cae9d6" stroke="#acd8ba" stroke-width="1"/><path d="M1440.0 649.7V662.4 M1434.7 657.0L1440.0 662.4L1445.3 657.0" fill="none" stroke="#107c10" stroke-width="1.9" stroke-linecap="round" stroke-linejoin="round"/><rect x="1653.8" y="646.2" width="10.4" height="19.6" rx="2.3" fill="none" stroke="#242424" stroke-width="1.5"/><line x1="1657.2" y1="662.4" x2="1660.8" y2="662.4" stroke="#242424" stroke-width="1.5"/><circle cx="1440.0" cy="719.0" r="14.7" fill="#fde300"/><path d="M1433.0 713.3L1438.3 719.3L1433.0 725.2 M1447.0 713.3L1441.7 719.3L1447.0 725.2" fill="none" stroke="#8e6c00" stroke-width="2.7" stroke-linecap="round" stroke-linejoin="round"/><rect x="1649.8" y="711.5" width="18.4" height="14.6" rx="2.6" fill="none" stroke="#242424" stroke-width="1.5"/><path d="M1650.2 715.0L1659.0 719.6L1667.8 715.0" fill="none" stroke="#242424" stroke-width="1.5"/><circle cx="1440.0" cy="782.0" r="14.7" fill="#fde300"/><path d="M1433.0 776.3L1438.3 782.3L1433.0 788.2 M1447.0 776.3L1441.7 782.3L1447.0 788.2" fill="none" stroke="#8e6c00" stroke-width="2.7" stroke-linecap="round" stroke-linejoin="round"/><rect x="1653.8" y="772.2" width="10.4" height="19.6" rx="2.3" fill="none" stroke="#242424" stroke-width="1.5"/><line x1="1657.2" y1="788.4" x2="1660.8" y2="788.4" stroke="#242424" stroke-width="1.5"/><circle cx="1440.0" cy="845.0" r="14.2" fill="#cae9d6" stroke="#acd8ba" stroke-width="1"/><path d="M1440.0 838.7V851.4 M1434.7 846.0L1440.0 851.4L1445.3 846.0" fill="none" stroke="#107c10" stroke-width="1.9" stroke-linecap="round" stroke-linejoin="round"/><rect x="1649.8" y="837.5" width="18.4" height="14.6" rx="2.6" fill="none" stroke="#242424" stroke-width="1.5"/><path d="M1650.2 841.0L1659.0 845.6L1667.8 841.0" fill="none" stroke="#242424" stroke-width="1.5"/><circle cx="1440.0" cy="908.0" r="14.7" fill="#fde300"/><path d="M1433.0 902.3L1438.3 908.3L1433.0 914.2 M1447.0 902.3L1441.7 908.3L1447.0 914.2" fill="none" stroke="#8e6c00" stroke-width="2.7" stroke-linecap="round" stroke-linejoin="round"/><rect x="1649.8" y="900.5" width="18.4" height="14.6" rx="2.6" fill="none" stroke="#242424" stroke-width="1.5"/><path d="M1650.2 904.0L1659.0 908.6L1667.8 904.0" fill="none" stroke="#242424" stroke-width="1.5"/><circle cx="1440.0" cy="971.0" r="14.2" fill="#f9dcdd" stroke="#eebfc2" stroke-width="1"/><path d="M1440.0 977.3V964.6 M1434.7 970.0L1440.0 964.6L1445.3 970.0" fill="none" stroke="#bc2f32" stroke-width="1.9" stroke-linecap="round" stroke-linejoin="round"/><rect x="1653.8" y="961.2" width="10.4" height="19.6" rx="2.3" fill="none" stroke="#242424" stroke-width="1.5"/><line x1="1657.2" y1="977.4" x2="1660.8" y2="977.4" stroke="#242424" stroke-width="1.5"/><circle cx="1440.0" cy="1034.0" r="14.2" fill="#cae9d6" stroke="#acd8ba" stroke-width="1"/><path d="M1440.0 1027.7V1040.4 M1434.7 1035.0L1440.0 1040.4L1445.3 1035.0" fill="none" stroke="#107c10" stroke-width="1.9" stroke-linecap="round" stroke-linejoin="round"/><rect x="1653.8" y="1024.2" width="10.4" height="19.6" rx="2.3" fill="none" stroke="#242424" stroke-width="1.5"/><line x1="1657.2" y1="1040.4" x2="1660.8" y2="1040.4" stroke="#242424" stroke-width="1.5"/></svg>
<div class="t" style="left:664.38px;top:1109.90px;font-size:21.40px;line-height:21.40px;color:#424242;transform:scaleX(0.9240);">Rows: 32</div>
</body></html>
